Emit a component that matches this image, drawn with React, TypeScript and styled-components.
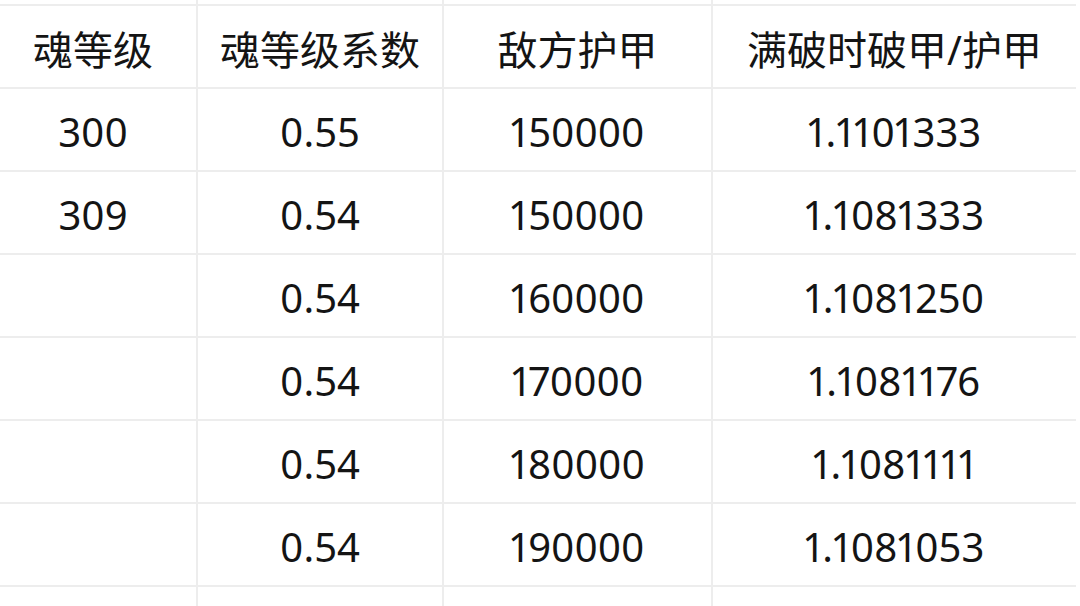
import React from "react";
import styled, { createGlobalStyle } from "styled-components";

const GlobalStyle = createGlobalStyle`
  html, body {
    margin: 0;
    padding: 0;
    background: #ffffff;
    overflow: hidden;
  }
  * {
    box-sizing: border-box;
  }
`;

const Page = styled.div`
  width: 1080px;
  height: 606px;
  overflow: hidden;
  background: #fff;
`;

const Sheet = styled.div`
  display: grid;
  grid-template-columns: 208px 246px 269px 363px;
  grid-auto-rows: 83px;
  margin-top: -77px;
  margin-left: -10px;
  font-family: "Noto Sans", "Noto Sans CJK SC", sans-serif;
  font-size: 40px;
  font-variant-numeric: proportional-nums;
  color: #141414;
`;

const Cell = styled.div<{ $last?: boolean }>`
  display: flex;
  align-items: center;
  justify-content: center;
  border-bottom: 2px solid #ededed;
  border-right: ${(p) => (p.$last ? "none" : "2px solid #ededed")};
  white-space: nowrap;
  padding-top: 3px;
`;

const header = ["魂等级", "魂等级系数", "敌方护甲", "满破时破甲/护甲"];

const rows = [
  ["300", "0.55", "150000", "1.1101333"],
  ["309", "0.54", "150000", "1.1081333"],
  ["", "0.54", "160000", "1.1081250"],
  ["", "0.54", "170000", "1.1081176"],
  ["", "0.54", "180000", "1.1081111"],
  ["", "0.54", "190000", "1.1081053"],
];

const App = () => {
  const all = [["", "", "", ""], header, ...rows, ["", "", "", ""]];

  return (
    <Page>
      <GlobalStyle />
      <Sheet>
        {all.map((row, r) =>
          row.map((text, c) => (
            <Cell key={`${r}-${c}`} $last={c === row.length - 1}>
              {text}
            </Cell>
          ))
        )}
      </Sheet>
    </Page>
  );
};

export default App;
